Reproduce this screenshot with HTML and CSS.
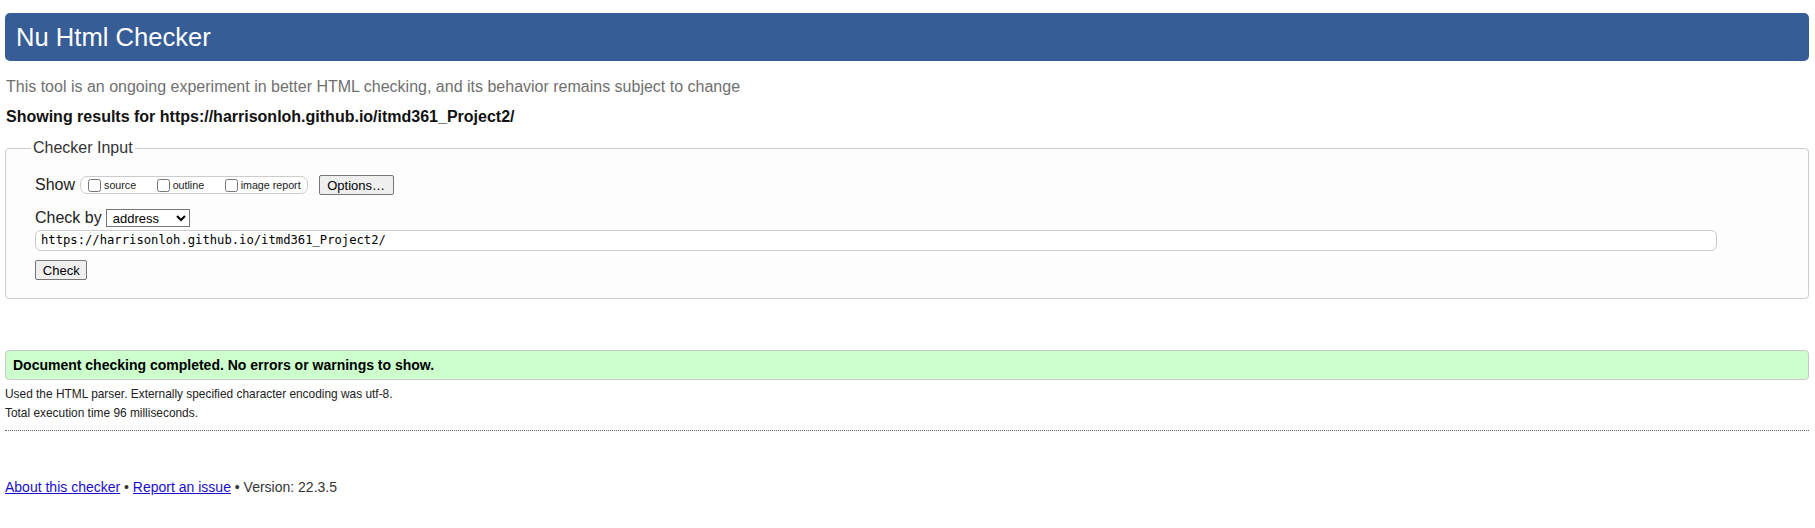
FILE: index.html
```html
<!DOCTYPE html>
<html lang="en">
<head>
<meta charset="utf-8">
<title>Nu Html Checker</title>
<link rel="stylesheet" href="styles.css">
</head>
<body>
<h1 class="title">Nu Html Checker</h1>
<p class="intro">This tool is an ongoing experiment in better HTML checking, and its behavior remains subject to change</p>
<p class="showing">Showing results for https://harrisonloh.github.io/itmd361_Project2/</p>
<fieldset class="input-region">
  <legend class="legend">Checker Input</legend>
  <div class="row row-show">
    <span class="row-label">Show</span>
    <div class="show-box">
      <label class="opt"><input type="checkbox" class="cb">source</label>
      <label class="opt"><input type="checkbox" class="cb">outline</label>
      <label class="opt opt-last"><input type="checkbox" class="cb">image report</label>
    </div>
    <button class="btn btn-options" type="button">Options…</button>
  </div>
  <div class="row row-by">
    <span class="row-label">Check by</span>
    <select class="sel"><option>address</option></select>
  </div>
  <div class="row row-url">
    <input class="url" type="text" value="https://harrisonloh.github.io/itmd361_Project2/">
  </div>
  <div class="row row-check">
    <button class="btn btn-check" type="button">Check</button>
  </div>
</fieldset>
<div class="success">Document checking completed. No errors or warnings to show.</div>
<p class="details details-first">Used the HTML parser. Externally specified character encoding was utf-8.</p>
<p class="details">Total execution time 96 milliseconds.</p>
<hr class="rule">
<p class="footer"><a href="#" class="link">About this checker</a> • <a href="#" class="link">Report an issue</a> • Version: 22.3.5</p>
</body>
</html>
```
FILE: styles.css
```css
html, body {
  margin: 0;
  background: #fff;
}
body {
  padding: 0 6px 0 5px;
  font-family: "Liberation Sans", Arial, Helvetica, sans-serif;
  color: #000;
}
.title {
  margin: 13px 0 0 0;
  padding: 9px 11px;
  height: 30px;
  line-height: 30px;
  font-size: 25.6px;
  font-weight: normal;
  color: #fff;
  background: #365d95;
  border-radius: 5px;
}
.intro {
  margin: 17px 0 0 1px;
  font-size: 16px;
  line-height: 18px;
  color: #707070;
}
.showing {
  margin: 12px 0 0 1px;
  font-size: 16px;
  line-height: 18px;
  font-weight: bold;
  color: #111;
}
.input-region {
  margin: 13px 0 0 0;
  padding: 18px 28px 18px 29px;
  border: 1px solid #cccccc;
  border-radius: 4px;
  background: #fdfdfd;
  width: auto;
  min-width: 0;
  box-sizing: border-box;
  display: block;
}
.legend {
  padding: 0 2px;
  margin-left: -4px;
  font-size: 16px;
  line-height: 18px;
  color: #333;
}
.row {
  display: flex;
  align-items: center;
}
.row-label {
  font-size: 16px;
  line-height: 18px;
  color: #222;
}
.row-show {
  height: 20px;
}
.show-box {
  display: flex;
  align-items: center;
  margin-left: 5px;
  height: 16px;
  padding: 0 6px 0 3px;
  border: 1px solid #cccccc;
  border-radius: 7px;
  background: #fff;
}
.opt {
  display: flex;
  align-items: center;
  font-size: 10.7px;
  line-height: 12px;
  color: #222;
  margin-right: 16.5px;
}
.opt-last {
  margin-right: 0;
}
.cb {
  width: 13px;
  height: 13px;
  margin: 0 3px 0 4px;
}
.btn {
  font-family: "Liberation Sans", Arial, Helvetica, sans-serif;
  font-size: 13px;
  height: 20px;
  padding: 0 6px;
  color: #000;
  background: #efefef;
  border: 1px solid #767676;
  border-radius: 2px;
  box-sizing: border-box;
}
.btn-options {
  margin-left: 11px;
  width: 75px;
}
.row-by {
  margin-top: 12.6px;
  height: 20px;
}
.sel {
  margin-left: 4px;
  width: 84px;
  height: 18px;
  font-family: "Liberation Sans", Arial, Helvetica, sans-serif;
  font-size: 13px;
  color: #000;
  background: #fff;
  border: 1px solid #767676;
  border-radius: 0;
  padding: 0 0 0 2px;
  box-sizing: border-box;
}
.row-url {
  margin-top: 2.4px;
}
.url {
  width: 1682px;
  height: 20.6px;
  box-sizing: border-box;
  margin: 0;
  padding: 0 5px;
  border: 1px solid #cccccc;
  border-radius: 6px;
  background: #fff;
  font-family: "DejaVu Sans Mono", "Liberation Mono", monospace;
  font-size: 12.2px;
  color: #000;
}
.row-check {
  margin-top: 9.5px;
}
.btn-check {
  width: 52px;
  padding: 0;
  margin-left: 0.3px;
}
.success {
  margin-top: 51px;
  padding: 6px 8px 5px 7px;
  font-size: 14px;
  line-height: 16.6px;
  font-weight: bold;
  color: #000;
  background: #ccffcc;
  border: 1px solid #c8c8c8;
  border-radius: 4px;
}
.details {
  margin: 0;
  font-size: 11.9px;
  line-height: 19.7px;
  color: #222;
}
.details-first {
  margin-top: 5px;
}
.rule {
  margin: 6px 0 0 0;
  height: 0;
  border: 0;
  border-top: 1px dotted #666;
}
.footer {
  margin: 47.5px 0 0 0;
  font-size: 14px;
  line-height: 16px;
  color: #333;
}
.link {
  color: #1a0dcc;
  text-decoration: underline;
}
```
